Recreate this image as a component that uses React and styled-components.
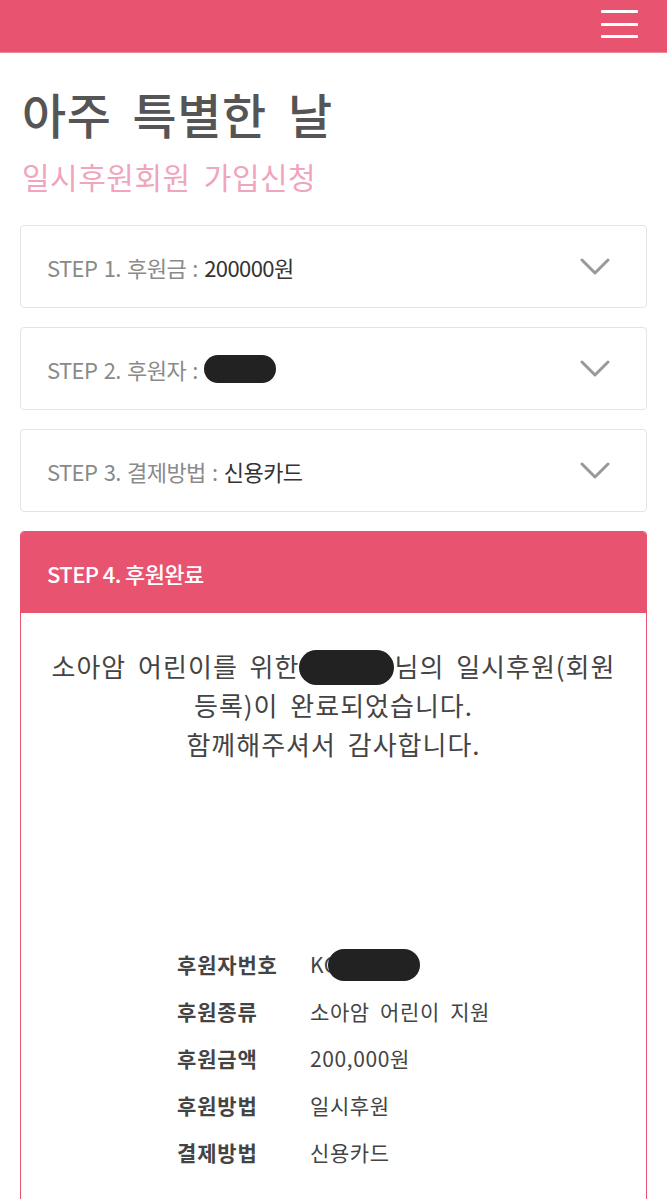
import React from 'react';
import styled, { createGlobalStyle } from 'styled-components';

const PINK = '#e8546f';

const GlobalStyle = createGlobalStyle`
  html, body {
    margin: 0;
    padding: 0;
    background: #fff;
  }
  body {
    font-family: "Noto Sans CJK KR", "Noto Sans", sans-serif;
  }
`;

const steps = [
  { no: 1, label: '후원금', value: '200000원' },
  { no: 2, label: '후원자', masked: true },
  { no: 3, label: '결제방법', value: '신용카드' },
];

const details = [
  { label: '후원자번호', value: 'KC', masked: true },
  { label: '후원종류', value: '소아암 어린이 지원' },
  { label: '후원금액', value: '200,000원' },
  { label: '후원방법', value: '일시후원' },
  { label: '결제방법', value: '신용카드' },
];

const Chevron = () => (
  <svg width="30" height="18" viewBox="0 0 30 18" fill="none">
    <path d="M2 2 L15 15 L28 2" stroke="#999" strokeWidth="3" strokeLinecap="round" strokeLinejoin="round" />
  </svg>
);

const App = () => {
  return (
    <Page>
      <GlobalStyle />
      <Header>
        <MenuButton aria-label="menu">
          <span />
          <span />
          <span />
        </MenuButton>
      </Header>
      <Main>
        <Title>아주 특별한 날</Title>
        <SubTitle>일시후원회원 가입신청</SubTitle>
        <StepList>
          {steps.map((s) => (
            <StepCard key={s.no}>
              <StepText>
                STEP {s.no}. {s.label} :{' '}
                {s.masked ? <Blob $w={72} $h={28} /> : <strong>{s.value}</strong>}
              </StepText>
              <Chevron />
            </StepCard>
          ))}
          <ActiveCard>
            <ActiveHead>STEP 4. 후원완료</ActiveHead>
            <ActiveBody>
              <Message>
                소아암 어린이를 위한<Blob $w={95} $h={35} />님의 일시후원(회원
                <br />
                등록)이 완료되었습니다.
                <br />
                함께해주셔서 감사합니다.
              </Message>
              <DetailTable>
                {details.map((d) => (
                  <React.Fragment key={d.label}>
                    <DetailLabel>{d.label}</DetailLabel>
                    <DetailValue>
                      {d.value}
                      {d.masked && <Blob $w={92} $h={32} $shift={-10} />}
                    </DetailValue>
                  </React.Fragment>
                ))}
              </DetailTable>
            </ActiveBody>
          </ActiveCard>
        </StepList>
      </Main>
    </Page>
  );
};

const Page = styled.div`
  width: 667px;
  min-height: 1199px;
  background: #fff;
`;

const Header = styled.header`
  height: 52px;
  background: ${PINK};
  border-bottom: 1px solid #ef8a9d;
  display: flex;
  justify-content: flex-end;
  align-items: center;
  padding-right: 29px;
`;

const MenuButton = styled.button`
  width: 37px;
  height: 28px;
  padding: 0;
  border: none;
  background: transparent;
  display: flex;
  flex-direction: column;
  justify-content: space-between;
  margin-bottom: 4px;
  span {
    display: block;
    height: 3px;
    background: #fff;
    border-radius: 1px;
  }
`;

const Main = styled.main`
  padding: 30px 20px 0;
`;

const Title = styled.h1`
  margin: 0 0 14px 2px;
  font-size: 48px;
  font-weight: 500;
  color: #555;
  line-height: 1.25;
  letter-spacing: 0.5px;
  word-spacing: 10px;
`;

const SubTitle = styled.h2`
  margin: 0 0 0 2px;
  font-size: 30px;
  font-weight: 400;
  color: #f0a5bc;
  line-height: 1.3;
  letter-spacing: 0.5px;
  word-spacing: 6px;
`;

const StepList = styled.div`
  margin-top: 29px;
  display: flex;
  flex-direction: column;
  gap: 19px;
`;

const StepCard = styled.div`
  height: 81px;
  border: 1px solid #e4e4e4;
  border-radius: 4px;
  display: flex;
  align-items: center;
  justify-content: space-between;
  padding: 0 36px 0 26px;
`;

const StepText = styled.div`
  font-size: 22px;
  color: #8a8a8a;
  letter-spacing: -0.6px;
  word-spacing: 2px;
  display: flex;
  align-items: center;
  white-space: pre;
  strong {
    color: #333;
    font-weight: 400;
  }
`;

const Blob = styled.span`
  display: inline-block;
  width: ${(p) => p.$w}px;
  height: ${(p) => p.$h}px;
  background: #222;
  border-radius: ${(p) => p.$h / 2}px;
  vertical-align: middle;
  margin-left: ${(p) => p.$shift || 0}px;
`;

const ActiveCard = styled.div`
  border: 1px solid ${PINK};
  border-radius: 4px 4px 0 0;
  overflow: hidden;
  min-height: 700px;
`;

const ActiveHead = styled.div`
  height: 81px;
  background: ${PINK};
  color: #fff;
  font-size: 22px;
  font-weight: 500;
  letter-spacing: -0.6px;
  display: flex;
  align-items: center;
  padding-left: 26px;
`;

const ActiveBody = styled.div`
  padding: 33px 10px 0;
  display: flex;
  flex-direction: column;
  align-items: center;
`;

const Message = styled.p`
  margin: 0;
  font-size: 26px;
  line-height: 39px;
  color: #444;
  text-align: center;
  letter-spacing: 1px;
  word-spacing: 5px;
  white-space: nowrap;
  span {
    vertical-align: -8px;
  }
`;

const DetailTable = styled.div`
  margin-top: 185px;
  display: grid;
  grid-template-columns: 133px auto;
  row-gap: 14px;
  align-items: center;
`;

const DetailLabel = styled.div`
  font-size: 21px;
  font-weight: 700;
  color: #444;
  line-height: 33px;
  letter-spacing: 0.8px;
`;

const DetailValue = styled.div`
  font-size: 21px;
  color: #444;
  line-height: 33px;
  letter-spacing: 0.6px;
  word-spacing: 5px;
  display: flex;
  align-items: center;
  white-space: pre;
`;

export default App;
